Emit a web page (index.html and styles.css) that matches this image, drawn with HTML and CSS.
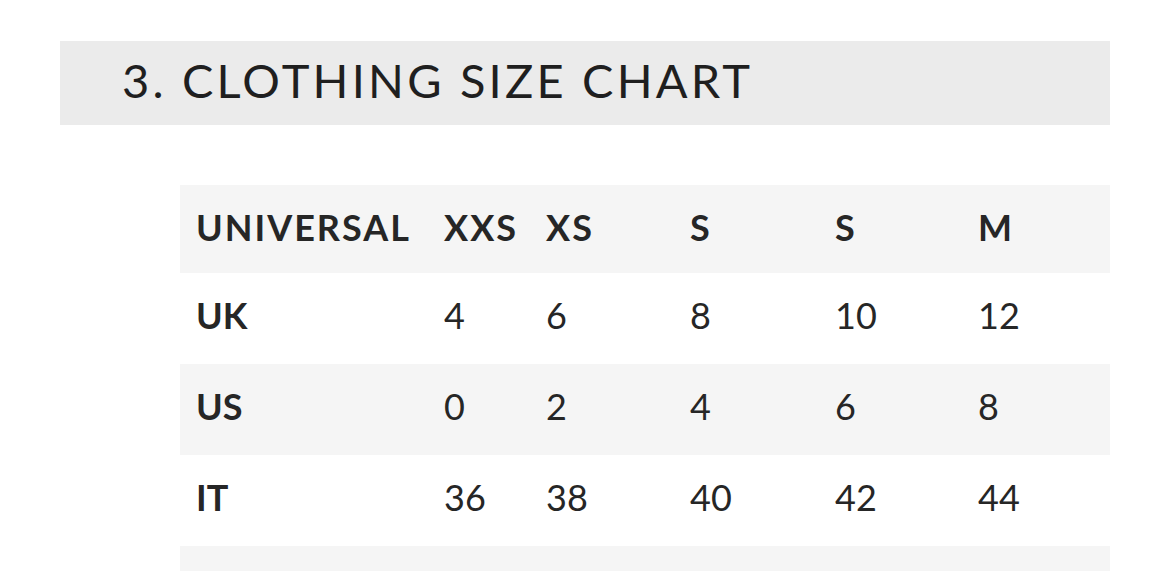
FILE: index.html
```html
<!DOCTYPE html>
<html lang="en">
<head>
<meta charset="utf-8">
<title>Clothing Size Chart</title>
<link rel="stylesheet" href="styles.css">
</head>
<body>
<main class="page">
  <h2 class="section-title">3. CLOTHING SIZE CHART</h2>
  <div class="size-table">
    <div class="row row-head">
      <div class="cell">UNIVERSAL</div><div class="cell">XXS</div><div class="cell">XS</div><div class="cell">S</div><div class="cell">S</div><div class="cell">M</div>
    </div>
    <div class="row">
      <div class="cell label">UK</div><div class="cell">4</div><div class="cell">6</div><div class="cell">8</div><div class="cell">10</div><div class="cell">12</div>
    </div>
    <div class="row shaded">
      <div class="cell label">US</div><div class="cell">0</div><div class="cell">2</div><div class="cell">4</div><div class="cell">6</div><div class="cell">8</div>
    </div>
    <div class="row">
      <div class="cell label">IT</div><div class="cell">36</div><div class="cell">38</div><div class="cell">40</div><div class="cell">42</div><div class="cell">44</div>
    </div>
    <div class="row shaded row-partial"></div>
  </div>
</main>
</body>
</html>
```

FILE: styles.css
```css
html, body {
  margin: 0;
  padding: 0;
  background: #ffffff;
  overflow: hidden;
}

.page {
  display: flex;
  flex-direction: column;
  padding: 41px 60px 0 60px;
  font-family: "Lato", "Liberation Sans", sans-serif;
  color: #222222;
}

.section-title {
  margin: 0;
  height: 84px;
  box-sizing: border-box;
  display: flex;
  align-items: center;
  padding: 0 0 6px 62px;
  background: #ebebeb;
  font-weight: 400;
  font-size: 47px;
  letter-spacing: 3.2px;
  color: #1f1f1f;
}

.size-table {
  margin: 60px 0 0 120px;
  display: flex;
  flex-direction: column;
}

.row {
  display: grid;
  grid-template-columns: 248px 102px 144px 145px 143px 148px;
  height: 91px;
  box-sizing: border-box;
  padding-bottom: 8px;
  align-items: center;
  font-size: 36px;
  font-weight: 400;
  color: #262626;
}

.row-head,
.shaded {
  background: #f5f5f5;
}

.row-head {
  height: 88px;
  font-weight: 700;
  letter-spacing: 2px;
  padding-bottom: 4px;
}

.row-partial {
  height: 30px;
  padding: 0;
}

.cell {
  padding-left: 16px;
}

.label {
  font-weight: 700;
}
```
